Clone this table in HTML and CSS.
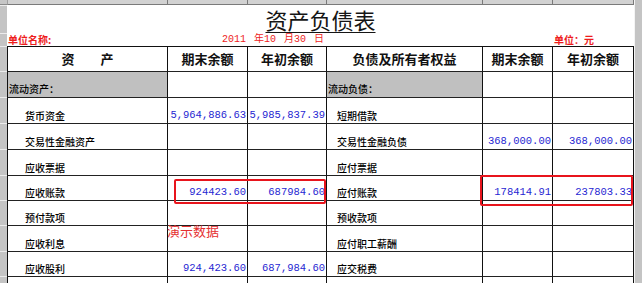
FILE: index.html
```html
<!DOCTYPE html>
<html lang="zh-CN">
<head>
<meta charset="utf-8">
<title>资产负债表</title>
<link rel="stylesheet" href="styles.css">
</head>
<body>
<div class="screen">
  <div class="sheet">
    <div class="grid">
      <div class="corner"></div>
      <div class="ch ch-first"></div><div class="ch"></div><div class="ch"></div><div class="ch"></div><div class="ch"></div><div class="ch ch-last"></div>

      <div class="rh"></div>
      <div class="title-cell"><span class="title">资产负债表</span></div>

      <div class="rh"></div>
      <div class="unit unit-name">单位名称:</div>
      <div class="unit unit-date">2011 年10 月30 日</div>
      <div class="unit unit-blank"></div>
      <div class="unit unit-money">单位：元</div>

      <div class="rh"></div>
      <div class="hd">资&emsp;&emsp;产</div>
      <div class="hd">期末余额</div>
      <div class="hd">年初余额</div>
      <div class="hd">负债及所有者权益</div>
      <div class="hd">期末余额</div>
      <div class="hd hd-last">年初余额</div>

      <div class="rh"></div>
      <div class="c sect">流动资产：</div>
      <div class="c"></div>
      <div class="c"></div>
      <div class="c sect">流动负债：</div>
      <div class="c"></div>
      <div class="c c-last"></div>

      <div class="rh"></div>
      <div class="c lbl">货币资金</div>
      <div class="c num">5,964,886.63</div>
      <div class="c num">5,985,837.39</div>
      <div class="c lbl-r">短期借款</div>
      <div class="c num"></div>
      <div class="c num c-last"></div>

      <div class="rh"></div>
      <div class="c lbl">交易性金融资产</div>
      <div class="c num"></div>
      <div class="c num"></div>
      <div class="c lbl-r">交易性金融负债</div>
      <div class="c num">368,000.00</div>
      <div class="c num c-last">368,000.00</div>

      <div class="rh"></div>
      <div class="c lbl">应收票据</div>
      <div class="c num"></div>
      <div class="c num"></div>
      <div class="c lbl-r">应付票据</div>
      <div class="c num"></div>
      <div class="c num c-last"></div>

      <div class="rh"></div>
      <div class="c lbl">应收账款</div>
      <div class="c num">924423.60</div>
      <div class="c num">687984.60</div>
      <div class="c lbl-r">应付账款</div>
      <div class="c num">178414.91</div>
      <div class="c num c-last">237803.33</div>

      <div class="rh"></div>
      <div class="c lbl">预付款项</div>
      <div class="c num"></div>
      <div class="c num"></div>
      <div class="c lbl-r">预收款项</div>
      <div class="c num"></div>
      <div class="c num c-last"></div>

      <div class="rh"></div>
      <div class="c lbl">应收利息</div>
      <div class="c num"></div>
      <div class="c num"></div>
      <div class="c lbl-r">应付职工薪酬</div>
      <div class="c num"></div>
      <div class="c num c-last"></div>

      <div class="rh"></div>
      <div class="c lbl">应收股利</div>
      <div class="c num">924,423.60</div>
      <div class="c num">687,984.60</div>
      <div class="c lbl-r">应交税费</div>
      <div class="c num"></div>
      <div class="c num c-last"></div>

      <div class="rh"></div>
      <div class="c lbl"></div>
      <div class="c num"></div>
      <div class="c num"></div>
      <div class="c lbl-r"></div>
      <div class="c num"></div>
      <div class="c num c-last"></div>
    </div>
    <div class="mark mark-a"></div>
    <div class="mark mark-b"></div>
    <div class="demo">演示数据</div>
  </div>
  <div class="vbar"></div>
</div>
</body>
</html>
```
FILE: styles.css
```css
html, body {
  margin: 0;
  padding: 0;
  background: #ffffff;
  overflow: hidden;
}
body {
  width: 642px;
  height: 283px;
  font-family: "Noto Sans CJK SC", "Noto Sans", sans-serif;
  color: #111111;
}
.screen {
  display: flex;
  width: 642px;
  height: 283px;
  overflow: hidden;
}
.sheet {
  position: relative;
  flex: 0 0 634px;
  height: 283px;
  overflow: hidden;
}
.vbar {
  flex: 1 1 auto;
  background: #c4c4c4;
  border-left: 1px solid #f4f4f4;
}
.grid {
  display: grid;
  grid-template-columns: 7px 160px 80px 79px 156px 70px 82px;
  grid-template-rows: 5px 28px 13px 25px 26px 26px 26px 26px 25px 25px 26px 25px 25px;
}
.grid > div {
  box-sizing: border-box;
  min-width: 0;
}
.corner {
  background: #c6c6c6;
  border-bottom: 1px solid #8a8a8a;
}
.ch {
  background: #d2d2d2;
  border-left: 1px solid #7a7a7a;
  border-bottom: 1px solid #7a7a7a;
}
.ch-first {
  border-left: 1px solid #a0a0a0;
}
.ch-last {
  border-right: 1px solid #7a7a7a;
}
.rh {
  background: #c4c4c4;
  border-top: 1px solid #ececec;
}
.title-cell {
  grid-column: 2 / 8;
  display: flex;
  align-items: center;
  justify-content: center;
  padding-bottom: 1px;
}
.title {
  font-size: 22px;
  line-height: 24px;
  color: #151515;
  text-decoration: underline;
  text-decoration-thickness: 1px;
  text-underline-offset: 3px;
}
.unit {
  display: flex;
  align-items: flex-end;
  color: #ee1c1c;
  font-size: 10px;
  line-height: 12px;
  white-space: pre;
}
.unit-name {
  padding-left: 1px;
  font-weight: 700;
}
.unit-date {
  grid-column: 3 / 5;
  justify-content: flex-end;
  padding-right: 2px;
  font-family: "Liberation Mono", "Noto Sans CJK SC", monospace;
  word-spacing: 2px;
}
.unit-blank {
  grid-column: 5 / 7;
}
.unit-money {
  padding-left: 2px;
  font-weight: 700;
}
.hd {
  display: flex;
  align-items: center;
  justify-content: center;
  border-left: 1px solid #111;
  border-top: 1px solid #111;
  font-size: 13px;
  font-weight: 700;
  line-height: 16px;
  color: #111;
}
.hd-last, .c-last {
  border-right: 1px solid #111;
}
.c {
  display: flex;
  align-items: flex-end;
  border-left: 1px solid #111;
  border-top: 1px solid #222;
  font-size: 10px;
  line-height: 12px;
  padding-bottom: 1px;
  white-space: nowrap;
  color: #000000;
  font-weight: 500;
}
.sect {
  background: #c0c0c0;
  padding-left: 1px;
  padding-bottom: 2px;
}
.lbl {
  padding-left: 17px;
}
.lbl-r {
  padding-left: 10px;
}
.num {
  justify-content: flex-end;
  padding-right: 1px;
  padding-bottom: 2px;
  font-family: "Liberation Mono", monospace;
  font-size: 10.5px;
  font-weight: 400;
  color: #2626d2;
  overflow: visible;
}
.mark {
  position: absolute;
  box-sizing: border-box;
  border: 2px solid #e8141c;
  border-radius: 2px;
}
.mark-a {
  left: 174px;
  top: 179px;
  width: 152px;
  height: 25px;
}
.mark-b {
  left: 480px;
  top: 175px;
  width: 153px;
  height: 31px;
}
.demo {
  position: absolute;
  left: 167px;
  top: 223px;
  font-size: 13px;
  line-height: 16px;
  color: #e53030;
}
```
